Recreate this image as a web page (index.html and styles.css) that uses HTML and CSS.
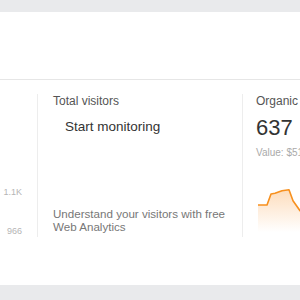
FILE: index.html
```html
<!DOCTYPE html>
<html lang="en">
<head>
    <meta charset="UTF-8">
    <meta name="viewport" content="width=device-width, initial-scale=1.0">
    <title>Overview</title>
    <link rel="stylesheet" href="styles.css">
</head>
<body>
    <div id="card">
        <div id="card-header"></div>

        <div id="card-body">
            <!-- Columna izquierda: eje del grafico -->
            <div class="col col-axis">
                <span class="axis-label">1.1K</span>
                <span class="axis-label">966</span>
            </div>

            <!-- Columna central: visitantes -->
            <div class="col col-visitors">
                <div class="top">
                    <div class="metric-title">Total visitors</div>
                    <div class="start-link">Start monitoring</div>
                </div>
                <div class="hint">Understand your visitors with free<br>Web Analytics</div>
            </div>

            <!-- Columna derecha: trafico organico -->
            <div class="col col-organic">
                <div class="metric-title">Organic traffic</div>
                <div class="metric-value">637</div>
                <div class="metric-sub">Value: $513</div>
                <svg class="spark" width="80" height="52" viewBox="0 0 80 52">
                    <defs>
                        <linearGradient id="spark-fill" x1="0" y1="0" x2="0" y2="1">
                            <stop offset="0" stop-color="#fbb36b" stop-opacity="0.45"/>
                            <stop offset="1" stop-color="#fbb36b" stop-opacity="0"/>
                        </linearGradient>
                    </defs>
                    <path d="M0 21 L9 21 L13 10 L17 9.3 L24 6.7 L31 5.7 L35 16.7 L42 26.7 L50 30 L80 30 L80 48 L0 48 Z" fill="url(#spark-fill)"/>
                    <polyline points="0,21 9,21 13,10 17,9.3 24,6.7 31,5.7 35,16.7 42,26.7 50,30 80,30" fill="none" stroke="#f7901e" stroke-width="1.6" stroke-linejoin="round"/>
                </svg>
            </div>
        </div>
    </div>
</body>
</html>
```

FILE: styles.css
```css
body, html {
    margin: 0;
    padding: 0;
}

body {
    font-family: "Liberation Sans", Arial, sans-serif;
    background-color: #e9eaec;
    width: 300px;
    height: 300px;
    overflow: hidden;
    padding-top: 12px;
    box-sizing: border-box;
}

#card {
    background-color: #fff;
    height: 273px;
    width: 340px;
}

#card-header {
    height: 67px;
    border-bottom: 1px solid #e6e6e6;
}

#card-body {
    display: flex;
    padding-top: 14px;
}

.col {
    height: 143px;
    box-sizing: border-box;
}

.col-axis {
    width: 38px;
    border-right: 1px solid #ededed;
    padding-right: 15px;
    display: flex;
    flex-direction: column;
    justify-content: flex-end;
    align-items: flex-end;
}

.axis-label {
    font-size: 9px;
    line-height: 12px;
    color: #b5b5b5;
}

.axis-label + .axis-label {
    margin-top: 27px;
}

.col-visitors {
    width: 205px;
    border-right: 1px solid #ededed;
    padding-left: 15px;
    display: flex;
    flex-direction: column;
    justify-content: space-between;
}

.metric-title {
    font-size: 12px;
    line-height: 13px;
    color: #555;
    margin-top: 1px;
    white-space: nowrap;
}

.start-link {
    font-size: 13.5px;
    line-height: 15px;
    color: #333;
    margin-top: 11px;
    padding-left: 12px;
}

.hint {
    font-size: 11.6px;
    line-height: 13px;
    color: #777;
    margin-bottom: 4px;
}

.col-organic {
    padding-left: 13px;
    display: flex;
    flex-direction: column;
    align-items: flex-start;
}

.metric-value {
    font-size: 22px;
    line-height: 28px;
    color: #333;
    margin-top: 6px;
}

.metric-sub {
    font-size: 10px;
    line-height: 12px;
    color: #aaa;
    margin-top: 5px;
    white-space: nowrap;
}

.spark {
    display: block;
    margin-top: 25px;
    margin-left: 2px;
}
```
